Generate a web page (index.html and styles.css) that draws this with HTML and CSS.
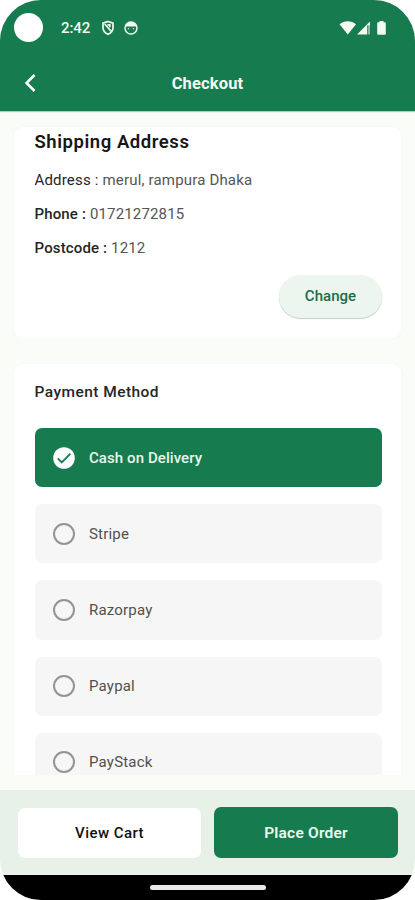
FILE: index.html
```html
<!DOCTYPE html>
<html lang="en">
<head>
<meta charset="utf-8">
<meta name="viewport" content="width=device-width, initial-scale=1">
<title>Checkout</title>
<link rel="stylesheet" href="styles.css">
</head>
<body>
<div class="phone">
  <header class="header">
    <div class="status">
      <span class="camera"></span>
      <span class="time">2:42</span>
      <svg class="shield" width="14" height="16" viewBox="0 0 14 16" fill="none" stroke="currentColor" stroke-width="1.7"><path d="M7 1.500 12 3.200v4.200c0 3.300-2 5.500-5 6.800-3-1.300-5-3.500-5-6.800V3.200z"/><path d="M3.700 4l6.400 7.200M6.500 4.800h2.300v2.500"/></svg>
      <svg class="face" width="14" height="14" viewBox="0 0 14 14"><circle cx="7" cy="7" r="6" fill="none" stroke="currentColor" stroke-width="1.500"/><path d="M1.500 5.500C2 2.500 4 1 7 1s5 1.500 5.500 4.500z" fill="currentColor"/><path d="M4.500 7.300v1M9.500 7.300v1" stroke="currentColor" stroke-width="1.300"/></svg>
      <svg class="signals" width="48" height="16" viewBox="0 0 48 16" fill="currentColor"><path d="M.5 4.300C5.300.2 12.300.2 17 4.300L8.800 14.500z"/><path d="M18 14.500 31 1.500v4h-3v9z"/><path d="M28.500 5.500h2.500v9h-2.500z" opacity=".5"/><path d="M40.500 1h4v1.300h1.300q1 0 1 1v10.400q0 1-1 1h-6.600q-1 0-1-1V3.300q0-1 1-1h1.300z"/></svg>
    </div>
    <div class="titlebar">
      <svg class="back" width="12" height="20" viewBox="0 0 12 20" fill="none" stroke="currentColor" stroke-width="2.500"><path d="M10.500 2 2.500 10l8 8"/></svg>
      <h1>Checkout</h1>
    </div>
  </header>
  <main class="content">
    <section class="card shipping">
      <h2>Shipping Address</h2>
      <p class="address"><b>Address :</b> merul, rampura Dhaka</p>
      <p class="number"><b>Phone :</b> 01721272815</p>
      <p class="postcode"><b>Postcode :</b> 1212</p>
      <button class="change">Change</button>
    </section>
    <section class="card payment">
      <h3>Payment Method</h3>
      <div class="options">
        <div class="option selected"><svg width="22" height="22" viewBox="0 0 22 22"><circle cx="11" cy="11" r="10.800" fill="#fff"/><path d="M4.800 11.300 8.800 15.300 17.400 6.700" fill="none" stroke="#177b50" stroke-width="1.900"/></svg><span class="cash">Cash on Delivery</span></div>
        <div class="option"><i class="radio"></i><span>Stripe</span></div>
        <div class="option"><i class="radio"></i><span>Razorpay</span></div>
        <div class="option"><i class="radio"></i><span>Paypal</span></div>
        <div class="option"><i class="radio"></i><span>PayStack</span></div>
      </div>
    </section>
  </main>
  <footer class="actions">
    <button class="view">View Cart</button>
    <button class="place">Place Order</button>
  </footer>
  <div class="gesture"><span></span></div>
</div>
</body>
</html>
```
FILE: styles.css
```css
* { box-sizing: border-box; }
body { margin: 0; background: #fff; font-family: Roboto, "Liberation Sans", sans-serif; font-size: 15px; }
h1, h2, h3, p { margin: 0; }
button { border: 0; padding: 0; font: inherit; }
svg { display: block; flex: none; }
.phone { width: 415px; height: 900px; display: flex; flex-direction: column; overflow: hidden; border-radius: 41px; background: #fafcf7; }
.header { height: 111px; flex: none; background: #177b50; color: #f3faf2; box-shadow: 0 1px 1px #a9cfbc; }
.status { height: 56px; display: flex; align-items: center; padding: 0 28px 0 14px; }
.camera { width: 29px; height: 29px; border-radius: 50%; background: #fff; margin-top: -2px; }
.time { width: 40px; margin-left: 18px; font-size: 15px; font-weight: 500; letter-spacing: -.1px; }
.face { margin-left: 9px; }
.signals { margin-left: auto; }
.titlebar { height: 54px; display: grid; grid-template-columns: 36px 1fr 36px; align-items: center; }
.back { margin-left: 24px; color: #fff; }
h1 { padding-top: 1px; font-size: 16.500px; line-height: 20px; font-weight: 700; text-align: center; letter-spacing: .15px; }
.content { height: 664px; flex: none; overflow: hidden; padding: 16px 14px 0 14px; margin-bottom: 15px; }
.card { background: #fff; border-radius: 9px; padding: 0 19px 0 20.500px; box-shadow: 0 0 5px rgba(60, 80, 50, .025); }
.shipping { height: 211px; display: flex; flex-direction: column; color: #555; }
h2 { margin-top: 3px; font-size: 18.500px; line-height: 24px; font-weight: 600; letter-spacing: .55px; color: #161616; }
.shipping p { line-height: 20px; letter-spacing: .15px; }
.shipping b { font-weight: 400; color: #262626; }
.shipping .address { margin-top: 16px; letter-spacing: .18px; }
.shipping p + p { margin-top: 14px; }
.shipping .number b, .shipping .postcode b { font-weight: 500; }
.change { align-self: flex-end; width: 103px; height: 43px; margin-top: 16.500px; border-radius: 22px; background: #edf5ef; color: #226b49; font-weight: 500; letter-spacing: .05px; box-shadow: 0 1px 1px rgba(0, 0, 0, .22); }
.payment { height: 480px; margin-top: 26px; }
h3 { padding-top: 18px; font-size: 15.500px; line-height: 20px; font-weight: 500; letter-spacing: .45px; color: #262626; }
.options { display: flex; flex-direction: column; gap: 17px; margin-top: 26px; }
.option { height: 59.200px; flex: none; display: flex; align-items: center; gap: 14px; padding-left: 18.500px; border-radius: 7px; background: #f6f6f6; color: #505050; letter-spacing: .2px; }
.selected { background: #177b50; color: #e7f6e9; font-weight: 500; letter-spacing: .08px; }
.radio { width: 22px; height: 22px; border: 2px solid #949494; border-radius: 50%; }
.actions { height: 85px; flex: none; display: grid; grid-template-columns: 183px 184px; gap: 13px; align-items: start; padding: 17px 17px 0 18px; background: #e7f1e8; font-weight: 500; }
.view { height: 50px; margin-top: 1px; border-radius: 7px; background: #fff; color: #111; letter-spacing: .45px; }
.place { height: 51px; border-radius: 7px; background: #177b50; color: #edfaef; font-size: 15.500px; font-weight: 600; letter-spacing: .2px; }
.gesture { height: 25px; flex: none; display: flex; justify-content: center; padding-top: 10px; background: #000; }
.gesture span { width: 116px; height: 5px; border-radius: 3px; background: #e9e9e9; }
```
